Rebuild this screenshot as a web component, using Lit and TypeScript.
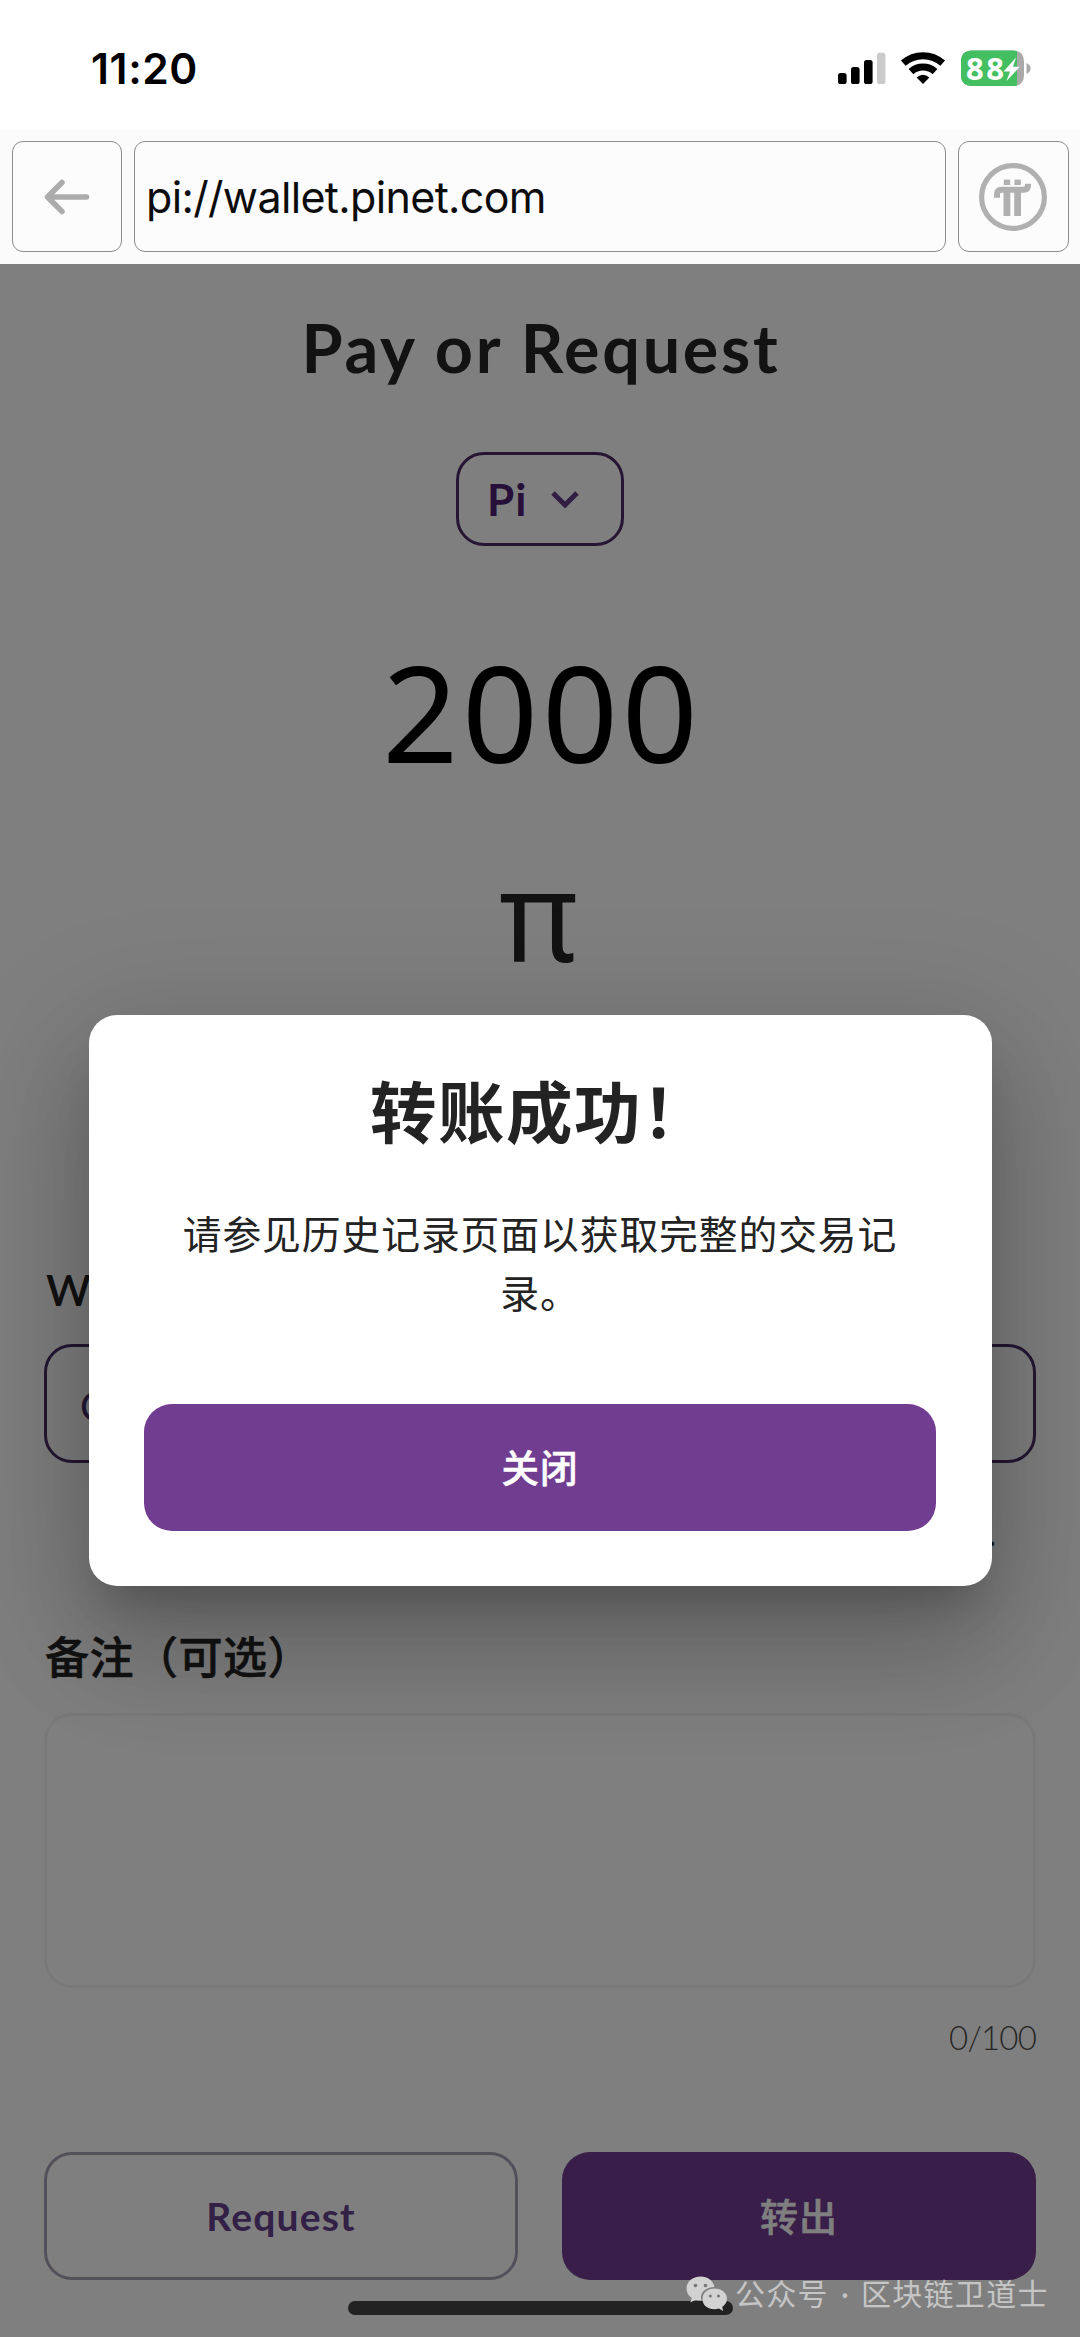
import { LitElement, html, css } from "lit";
import { customElement } from "lit/decorators.js";

@customElement("status-bar")
class StatusBar extends LitElement {
  static styles = css`
    :host { display: block; height: 130px; background: #fff; }
    .bar { display: flex; align-items: center; height: 136px; padding: 0 47px 0 91px; justify-content: space-between; box-sizing: border-box; }
    .time { font: 600 42.5px/50px Inter, "Liberation Sans", sans-serif; color: #000; letter-spacing: 0.6px; padding-top: 1px; }
    .icons { display: block; }
    .pct { font: 700 31px "Noto Sans", sans-serif; fill: #fff; }
  `;
  render() {
    return html`<div class="bar">
      <div class="time">11:20</div>
      <svg class="icons" width="196" height="40" viewBox="836 48 196 40">
        <g fill="#000">
          <rect x="837" y="73" width="8.6" height="11" rx="2.6" />
          <rect x="850" y="67" width="8.6" height="17" rx="2.6" />
          <rect x="863" y="60" width="8.6" height="24" rx="2.6" />
        </g>
        <rect x="876" y="52.7" width="8.4" height="31.3" rx="2.6" fill="#cbcbcb" />
        <g fill="none" stroke="#000" stroke-width="7">
          <path d="M902.3 63.2 A29.5 29.5 0 0 1 941.7 63.2" />
          <path d="M910 71.6 A18 18 0 0 1 934 71.6" />
        </g>
        <path d="M922 84 L915.6 77.4 Q922 72.2 928.4 77.4 Z" fill="#000" />
        <path d="M971.5 50.5 H1012 Q1023 50.5 1023 61.5 V75 Q1023 86 1012 86 H971.5 Q960 86 960 75 V61.5 Q960 50.5 971.5 50.5 Z" fill="#a9a9a9" />
        <path d="M971.5 50.5 H1012 Q1014 50.5 1016 51 V85.5 Q1014 86 1012 86 H971.5 Q960 86 960 75 V61.5 Q960 50.5 971.5 50.5 Z" fill="#43bf62" />
        <path d="M1025.5 63 Q1029.6 65 1029.6 68.5 Q1029.6 72 1025.5 74 Z" fill="#a9a9a9" />
        <text class="pct" x="965" y="79.7" textLength="38">88</text>
        <path d="M1015 57.5 L1002.5 71.5 H1009 L1005.5 81 L1018.8 66.8 H1012 Z" fill="#fff" />
      </svg>
    </div>`;
  }
}

@customElement("address-bar")
class AddressBar extends LitElement {
  static styles = css`
    :host { display: block; background: #fbfbfb; height: 133.5px; }
    .row { display: flex; gap: 12px; padding: 11px 11.5px 0; }
    .box { box-sizing: border-box; height: 111px; border: 1.2px solid #8c8c8c; border-radius: 11px; display: flex; align-items: center; justify-content: center; background: #fcfcfc; }
    .icon { width: 110.5px; flex: none; }
    .url { flex: 1; justify-content: flex-start; padding-left: 11px; font: 400 43px/50px Inter, "Liberation Sans", sans-serif; color: #0c0c0c; letter-spacing: -0.65px; }
  `;
  render() {
    return html`<div class="row">
      <div class="box icon">
        <svg width="50" height="44" viewBox="42 175 50 44" fill="none" stroke="#acacac" stroke-width="5.5" stroke-linecap="round" stroke-linejoin="round">
          <path d="M86.5 197 H47.5 M62 182.5 L47.5 197 L62 211.5" />
        </svg>
      </div>
      <div class="box url">pi://wallet.pinet.com</div>
      <div class="box icon">
        <svg width="70" height="70" viewBox="-35 -35 70 70">
          <circle r="31.4" fill="none" stroke="#b0b0b0" stroke-width="5.2" />
          <g fill="#b0b0b0">
            <rect x="-9.2" y="-17.4" width="6.4" height="5.4" />
            <rect x="1.4" y="-17.4" width="6.4" height="5.4" />
            <rect x="-9.5" y="-7" width="6.8" height="26" />
            <rect x="1.2" y="-7" width="6.8" height="26" />
          </g>
          <path d="M-16 0.8 V-2.5 Q-16 -7.2 -11.5 -7.2 H10.5 Q15.2 -7.2 15.2 -13.2" fill="none" stroke="#b0b0b0" stroke-width="6" />
        </svg>
      </div>
    </div>`;
  }
}

@customElement("success-dialog")
class SuccessDialog extends LitElement {
  static styles = css`
    :host {
      display: flex; flex-direction: column; box-sizing: border-box; width: 903px; height: 571px;
      padding: 49px 55.5px 55px; background: #fff; border-radius: 28px; color: #232323; text-align: center;
      font-family: "Noto Sans CJK SC", sans-serif;
      box-shadow: 0 30px 41px -19px rgba(0,0,0,.2), 0 66px 105px 8px rgba(0,0,0,.14), 0 25px 127px 22px rgba(0,0,0,.12);
    }
    .title { font-size: 66.5px; line-height: 90px; font-weight: 700; letter-spacing: 1.5px; margin: 0; }
    .message { font-size: 38.8px; line-height: 58.7px; letter-spacing: 0.9px; margin: 49.5px 36px 0; font-weight: 400; }
    .close { margin-top: auto; height: 127px; border: 0; border-radius: 28px; padding: 0 0 3px; background: #713d90; color: #fff; font: 500 37.5px/60px "Noto Sans CJK SC", sans-serif; -webkit-text-stroke: 0.5px; letter-spacing: 0.9px; }
  `;
  render() {
    return html`
      <h2 class="title">转账成功！</h2>
      <p class="message">请参见历史记录页面以获取完整的交易记录。</p>
      <button class="close">关闭</button>`;
  }
}

@customElement("app-root")
class AppRoot extends LitElement {
  static styles = css`
    :host { display: block; width: 1080px; height: 2337px; overflow: hidden; position: relative; background: #fff; font-family: Lato, "Noto Sans CJK SC", sans-serif; }
    .page { position: relative; height: 2073.5px; overflow: hidden; box-sizing: border-box; padding: 43px 44px 0; display: flex; flex-direction: column; color: #242424; }
    .heading { font-size: 66.5px; line-height: 80px; font-weight: 700; margin: 0; text-align: center; letter-spacing: 2.7px; padding-left: 2px; }
    .unit { align-self: center; margin-top: 65px; box-sizing: border-box; width: 168px; height: 94.5px; border: 3px solid #4d2a64; border-radius: 28px; display: flex; align-items: center; padding-left: 28px; gap: 24px; color: #4d1f70; font: 700 44px/50px Lato, sans-serif; letter-spacing: 1px; }
    .amount { margin-top: 91px; font: 400 133px/150px "Noto Sans", sans-serif; color: #000; letter-spacing: 3.8px; padding-left: 4px; text-align: center; }
    .pi { margin-top: 51px; font: 400 127px/150px "Noto Sans", sans-serif; text-align: center; transform: scaleX(.95); margin-right: 3px; }
    .label { font-size: 43px; line-height: 52px; font-weight: 600; margin-top: 276px; padding-left: 2px; }
    .field { box-sizing: border-box; margin-top: 28px; height: 119px; border: 3px solid #4a2e66; border-radius: 28px; padding-left: 33px; font-size: 40px; line-height: 118px; color: #4a3070; }
    .hint { margin-top: 47px; font-size: 34px; line-height: 46px; text-align: right; padding-right: 40px; }
    .memo { margin-top: 68.5px; font: 500 44px/60px "Noto Sans CJK SC", sans-serif; -webkit-text-stroke: 0.6px; letter-spacing: 0.5px; padding-left: 1px; }
    .area { box-sizing: border-box; margin-top: 28.5px; height: 275px; border: 3px solid #f2f2f2; border-radius: 28px; }
    .count { margin-top: 29px; font-size: 33px; line-height: 40px; text-align: right; font-weight: 300; letter-spacing: -0.8px; color: #4c4c4c; }
    .actions { margin-top: 95px; display: grid; grid-template-columns: 1fr 1fr; gap: 44px; }
    .btn { box-sizing: border-box; height: 127.5px; border-radius: 28px; display: flex; align-items: center; justify-content: center; font-size: 39px; font-weight: 700; }
    .request { border: 3px solid #a8a0b6; color: #64408c; letter-spacing: 1.2px; }
    .send { background: #713d90; color: #fff; font: 500 38px/60px "Noto Sans CJK SC", sans-serif; -webkit-text-stroke: 0.5px; letter-spacing: 0.9px; padding-bottom: 2px; }
    .overlay { position: absolute; inset: 0; background: rgba(0,0,0,.5); display: flex; align-items: center; justify-content: center; }
    .home { position: absolute; left: 348px; top: 2301px; width: 385px; height: 14px; border-radius: 7px; background: #222; }
    .mark { position: absolute; left: 685px; top: 2272px; display: flex; align-items: center; gap: 7px; color: rgba(225,225,225,.72); font: 400 30px/40px "Noto Sans CJK SC", sans-serif; letter-spacing: 1.3px; white-space: pre; }
    .dot { font-family: Lato, sans-serif; padding: 0 2px 0 3px; }
  `;
  render() {
    return html`
      <status-bar></status-bar>
      <address-bar></address-bar>
      <main class="page">
        <h1 class="heading">Pay or Request</h1>
        <div class="unit">Pi
          <svg width="28" height="20" viewBox="0 0 28 20" fill="none" stroke="#643c86" stroke-width="5"><path d="M2 4 L14 16 L26 4" /></svg>
        </div>
        <div class="amount">2000</div>
        <div class="pi">π</div>
        <div class="label">W</div>
        <div class="field">C</div>
        <div class="hint">.</div>
        <div class="memo">备注（可选）</div>
        <div class="area"></div>
        <div class="count">0/100</div>
        <div class="actions">
          <div class="btn request">Request</div>
          <div class="btn send">转出</div>
        </div>
        <div class="overlay"><success-dialog></success-dialog></div>
      </main>
      <div class="home"></div>
      <div class="mark"><svg width="43" height="36" viewBox="0 0 43 36">
          <path d="M15.5 1.5 C7.5 1.5 1.5 6.7 1.5 13.5 C1.5 17.5 3.5 20.8 6.8 23 L5.3 27.5 L10.5 24.8 C12 25.3 14 25.5 15.5 25.5 H16.5 C14 18 21 12 29.5 12 C28 5.5 22.5 1.5 15.5 1.5 Z" fill="#d2d2d2" />
          <path d="M29.5 13.5 C22.5 13.5 17.5 18 17.5 24 C17.5 30 22.5 34.3 29.5 34.3 C31 34.3 32.6 34 34 33.6 L38.2 36 L37.2 32 C40 30 42 27.3 42 24 C42 18 36.5 13.5 29.5 13.5 Z" fill="#d2d2d2" />
          <g fill="#777"><circle cx="10.5" cy="10.5" r="1.8" /><circle cx="20.5" cy="10.5" r="1.8" /><circle cx="25.3" cy="21" r="1.5" /><circle cx="33.5" cy="21" r="1.5" /></g>
        </svg><div>公众号<span class="dot"> · </span>区块链卫道士</div></div>`;
  }
}
